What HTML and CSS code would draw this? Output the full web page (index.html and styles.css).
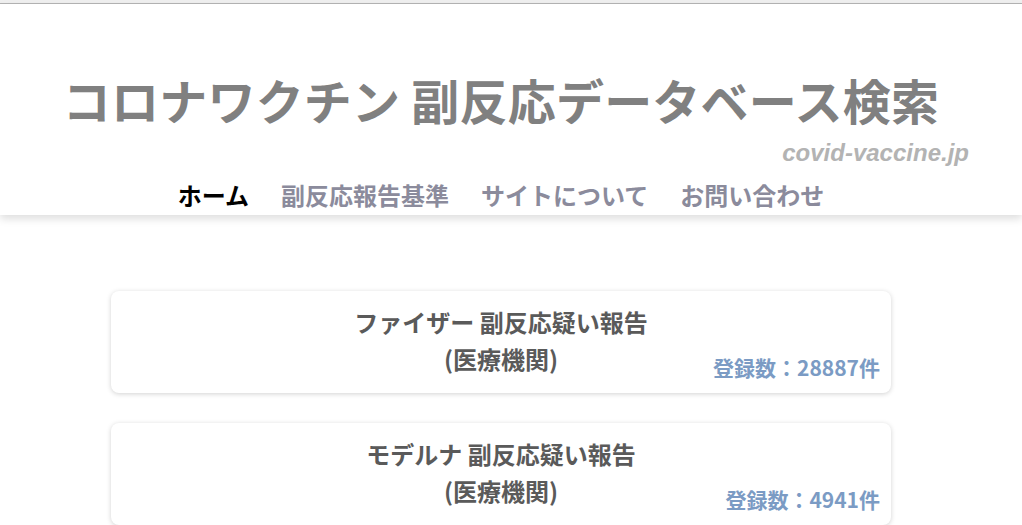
FILE: index.html
```html
<!DOCTYPE html>
<html lang="ja">
<head>
   <meta charset="utf-8" />
   <title>コロナワクチン 副反応データベース検索</title>
   <link rel="stylesheet" href="styles.css">
</head>
<body>
   <div class="topbar"></div>
   <header class="site-header">
      <div class="header-inner">
         <h1 class="site-title">コロナワクチン 副反応データベース検索</h1>
         <p class="site-domain">covid-vaccine.jp</p>
         <nav class="site-nav">
            <a href="#" class="nav-link current">ホーム</a>
            <a href="#" class="nav-link">副反応報告基準</a>
            <a href="#" class="nav-link">サイトについて</a>
            <a href="#" class="nav-link">お問い合わせ</a>
         </nav>
      </div>
   </header>
   <main class="content">
      <a href="#" class="card">
         <div class="card-title">ファイザー 副反応疑い報告<br />(医療機関)</div>
         <div class="card-count">登録数：28887件</div>
      </a>
      <a href="#" class="card">
         <div class="card-title">モデルナ 副反応疑い報告<br />(医療機関)</div>
         <div class="card-count">登録数：4941件</div>
      </a>
   </main>
</body>
</html>
```

FILE: styles.css
```css
body { margin: 0; padding-right: 20px; font-family: "Noto Sans CJK JP", "Noto Sans", sans-serif; background: #fff; overflow: hidden; }

.topbar { height: 3px; background: #efefef; border-bottom: 1px solid #b4b4b4; margin-right: -20px; }

.site-header { background: #fff; margin-right: -20px; padding-right: 20px; box-shadow: 0 4px 8px rgba(0, 0, 0, 0.13); }
.header-inner { max-width: 936px; margin: 0 auto; }

.site-title { margin: 0; padding-top: 66px; font-size: 48px; line-height: 58px; font-weight: bold; color: #808080; text-align: center; letter-spacing: 0.2px; }

.site-domain { margin: 11px 0 0; font-family: "Liberation Sans", Arial, sans-serif; font-size: 24px; line-height: 27px; font-weight: bold; font-style: italic; color: #b3b3b3; text-align: right; }

.site-nav { display: flex; justify-content: center; gap: 32px; margin-top: 9px; }
.nav-link { font-size: 24px; line-height: 40px; font-weight: bold; color: #8b8b9c; text-decoration: none; }
.nav-link.current { color: #000; }

.content { width: 780px; margin: 76px auto 0; display: flex; flex-direction: column; gap: 30px; }

.card { position: relative; display: block; padding: 12px 0 16px; background: #fff; border-radius: 8px; box-shadow: 0 1px 5px rgba(0, 0, 0, 0.18); text-decoration: none; }
.card-title { font-size: 24px; line-height: 37px; font-weight: bold; color: #5a5a5a; text-align: center; }
.card-count { position: absolute; right: 11px; bottom: 13px; font-size: 21px; line-height: 26px; font-weight: bold; color: #7b9bc4; }
```
